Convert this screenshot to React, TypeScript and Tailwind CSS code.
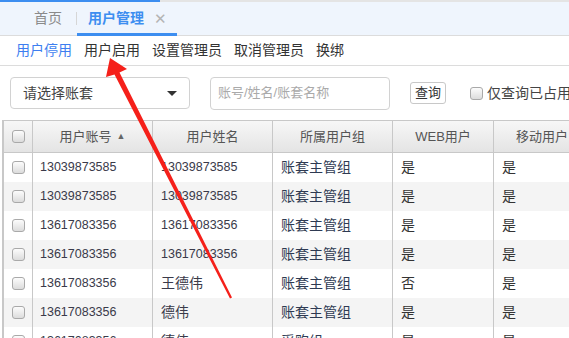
import React from 'react';

const rows = [
  { account: '13039873585', name: '13039873585', group: '账套主管组', web: '是', mobile: '是' },
  { account: '13039873585', name: '13039873585', group: '账套主管组', web: '是', mobile: '是' },
  { account: '13617083356', name: '13617083356', group: '账套主管组', web: '是', mobile: '是' },
  { account: '13617083356', name: '13617083356', group: '账套主管组', web: '是', mobile: '是' },
  { account: '13617083356', name: '王德伟', group: '账套主管组', web: '否', mobile: '是' },
  { account: '13617083356', name: '德伟', group: '账套主管组', web: '是', mobile: '是' },
  { account: '13617083356', name: '德伟', group: '采购组', web: '是', mobile: '是' },
];

function Box() {
  return (
    <span className="block shrink-0 w-[13px] h-[13px] rounded-[3px] border border-[#a9a9a9] bg-gradient-to-b from-[#fcfcfc] to-[#dcdcdc]" />
  );
}

export default function App() {
  return (
    <div
      className="relative w-[569px] h-[338px] overflow-hidden bg-white text-[#333]"
      style={{ fontFamily: '"Liberation Sans", "Noto Sans CJK SC", sans-serif' }}
    >
      {/* tab strip */}
      <div className="flex h-[2px]">
        <div className="w-[160px] bg-[#3d8ef0]" />
        <div className="flex-1 bg-[#e4e4e4]" />
      </div>
      <div className="flex h-[34px] items-stretch bg-[#eff5fd] border-b border-[#dcdcdc] pl-[34px]">
        <div className="flex items-center pr-[14px] text-[14px] text-[#8a8a8a]">首页</div>
        <div className="my-[10px] w-px bg-[#d6d6d6]" />
        <div className="relative flex items-center pl-[11px] pr-[10px] gap-[10px]">
          <span className="text-[14px] font-bold text-[#3d8ef0]">用户管理</span>
          <span className="text-[15px] text-[#b4b4b4] leading-none">✕</span>
          <div className="absolute left-0 right-0 bottom-[-1px] h-[3px] bg-[#3d8ef0]" />
        </div>
      </div>

      {/* action links */}
      <div className="flex h-[30px] items-center gap-[12px] pl-[16px] border-b border-[#dcdcdc] text-[14px]">
        <span className="text-[#3d7ef0]">用户停用</span>
        <span>用户启用</span>
        <span>设置管理员</span>
        <span>取消管理员</span>
        <span>换绑</span>
      </div>

      {/* filters */}
      <div className="flex items-center h-[54px] pl-[10px] text-[14px]">
        <div className="flex shrink-0 items-center justify-between w-[180px] h-[32px] rounded-[4px] border border-[#d2d2d2] pl-[12px] pr-[12px]">
          <span className="text-[#444]">请选择账套</span>
          <span className="w-0 h-0 border-l-[5px] border-r-[5px] border-t-[5px] border-l-transparent border-r-transparent border-t-[#333]" />
        </div>
        <div className="ml-[20px] flex shrink-0 items-center w-[180px] h-[33px] rounded-[4px] border border-[#d2d2d2] pl-[7px] text-[#aaa] text-[13px]">
          账号/姓名/账套名称
        </div>
        <div className="ml-[20px] flex shrink-0 items-center justify-center w-[36px] h-[22px] rounded-[3px] border border-[#c8c8c8] text-[13px]">
          查询
        </div>
        <div className="ml-[24px] flex shrink-0 items-center gap-[4px] text-[14px] whitespace-nowrap">
          <Box />
          <span className="text-[#444]">仅查询已占用购买</span>
        </div>
      </div>

      {/* table */}
      <div className="ml-[2px] border-l-[2px] border-t border-[#c8c8c8]">
        <div className="grid grid-cols-[29px_120px_120px_120px_101px_96px] h-[32px] bg-gradient-to-b from-[#f7f7f7] to-[#e4e4e4] border-b border-[#c8c8c8] text-[13px] text-[#555]">
          <div className="flex items-center justify-center border-r border-[#c8c8c8]"><Box /></div>
          <div className="flex items-center justify-center gap-[5px] border-r border-[#c8c8c8]">
            用户账号<span className="text-[9px] text-[#666]">▲</span>
          </div>
          <div className="flex items-center justify-center border-r border-[#c8c8c8]">用户姓名</div>
          <div className="flex items-center justify-center border-r border-[#c8c8c8]">所属用户组</div>
          <div className="flex items-center justify-center border-r border-[#c8c8c8]">WEB用户</div>
          <div className="flex items-center justify-center whitespace-nowrap">移动用户</div>
        </div>
        {rows.map((r, i) => (
          <div
            key={i}
            className={`grid grid-cols-[29px_120px_120px_120px_101px_96px] h-[29px] text-[14px] whitespace-nowrap ${i % 2 === 1 ? 'bg-[#f4f4f4]' : 'bg-white'}`}
          >
            <div className="flex items-center justify-center border-r border-[#c8c8c8]"><Box /></div>
            <div className="flex items-center pl-[7px] border-r border-[#c8c8c8] text-[12.5px] text-[#3a3a4a]">{r.account}</div>
            <div className={`flex items-center pl-[8px] border-r border-[#c8c8c8] text-[#3a3a4a] ${/^\d/.test(r.name) ? 'text-[12.5px]' : 'text-[14px]'}`}>{r.name}</div>
            <div className="flex items-center pl-[8px] border-r border-[#c8c8c8] text-[#2e3a52]">{r.group}</div>
            <div className="flex items-center pl-[8px] border-r border-[#c8c8c8]">{r.web}</div>
            <div className="flex items-center pl-[8px]">{r.mobile}</div>
          </div>
        ))}
      </div>

      {/* red annotation arrow */}
      <svg className="absolute inset-0 pointer-events-none" width="569" height="338" viewBox="0 0 569 338">
        <polygon
          points="110,58 127,69 119.5,72.5 232,297.5 230,298.5 114.5,74.5 106,77"
          fill="#f5201a"
        />
      </svg>
    </div>
  );
}
